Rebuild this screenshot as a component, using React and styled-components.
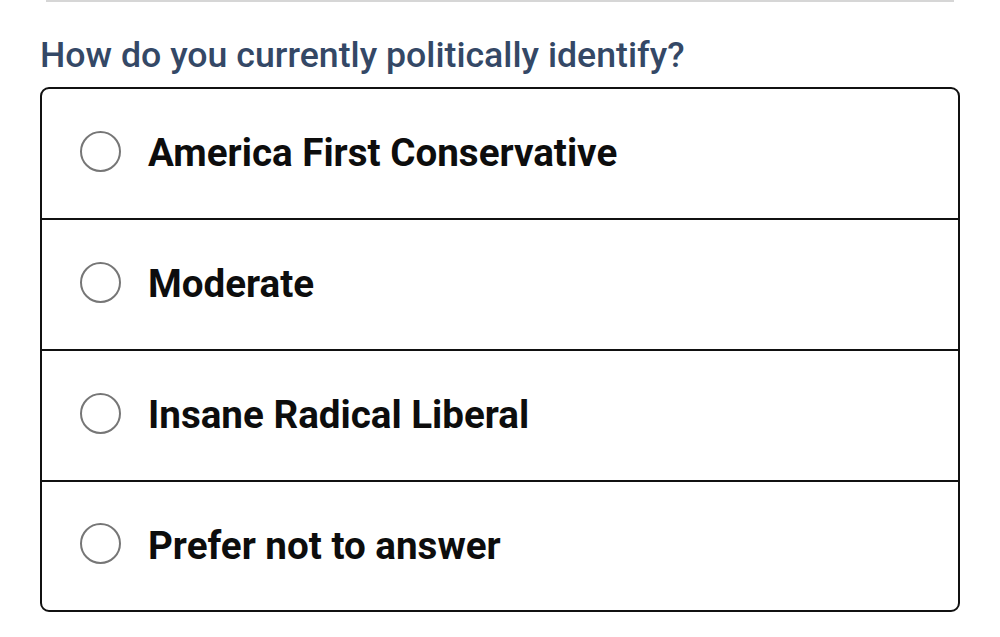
import React from "react";
import styled, { createGlobalStyle } from "styled-components";

const Global = createGlobalStyle`
  html, body { margin: 0; padding: 0; background: #fff; }
  body { font-family: Roboto, "Noto Sans", sans-serif; }
`;

const Page = styled.div`
  width: 1000px;
  height: 637px;
  box-sizing: border-box;
  padding: 0 40px;
  display: flex;
  flex-direction: column;
  overflow: hidden;
`;

const TopRule = styled.div`
  height: 2px;
  margin: 0 6px;
  background: #d6d6d6;
`;

const Question = styled.h2`
  margin: 30px 0 0;
  font-size: 35.7px;
  line-height: 46px;
  font-weight: 500;
  color: #344866;
`;

const OptionList = styled.div`
  margin-top: 9px;
  border: 2px solid #111;
  border-radius: 9px;
  display: flex;
  flex-direction: column;
`;

const Option = styled.label`
  box-sizing: border-box;
  display: flex;
  align-items: center;
  gap: 27px;
  padding: 0 0 2px 38px;
  border-top: ${(p) => (p.$first ? "none" : "2px solid #111")};
  height: ${(p) => p.$height}px;
  cursor: pointer;
`;

const Radio = styled.span`
  width: 41px;
  height: 41px;
  box-sizing: border-box;
  border-radius: 50%;
  border: 2.5px solid #767676;
  flex-shrink: 0;
  margin-bottom: 3px;
`;

const OptionText = styled.span`
  font-size: 38.6px;
  font-weight: 700;
  color: #0d0d0d;
`;

const options = [
  "America First Conservative",
  "Moderate",
  "Insane Radical Liberal",
  "Prefer not to answer",
];

const heights = [129, 131, 131, 130];

export default function App() {
  return (
    <>
      <Global />
      <Page>
        <TopRule />
        <Question>How do you currently politically identify?</Question>
        <OptionList>
          {options.map((o, i) => (
            <Option key={o} $first={i === 0} $height={heights[i]}>
              <Radio />
              <OptionText>{o}</OptionText>
            </Option>
          ))}
        </OptionList>
      </Page>
    </>
  );
}
